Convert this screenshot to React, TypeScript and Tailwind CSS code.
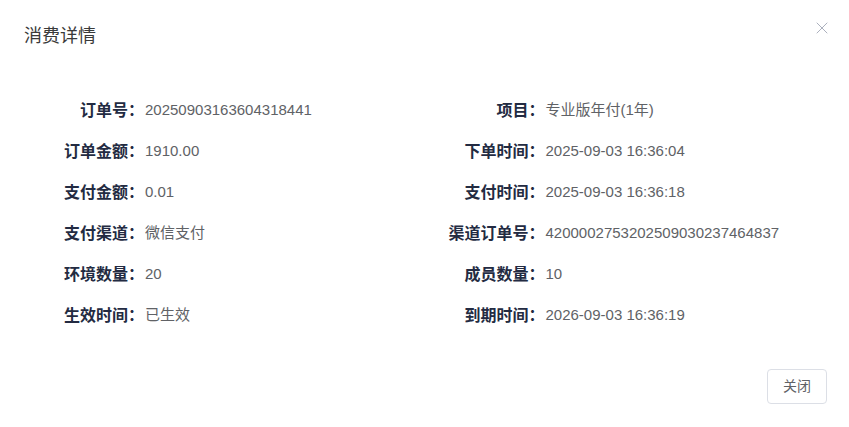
import React from 'react';
import { X } from 'lucide-react';

interface Field {
  label: string;
  value: string;
}

// left / right pairs, row by row
const rows: [Field, Field][] = [
  [
    { label: '订单号', value: '20250903163604318441' },
    { label: '项目', value: '专业版年付(1年)' },
  ],
  [
    { label: '订单金额', value: '1910.00' },
    { label: '下单时间', value: '2025-09-03 16:36:04' },
  ],
  [
    { label: '支付金额', value: '0.01' },
    { label: '支付时间', value: '2025-09-03 16:36:18' },
  ],
  [
    { label: '支付渠道', value: '微信支付' },
    { label: '渠道订单号', value: '4200002753202509030237464837' },
  ],
  [
    { label: '环境数量', value: '20' },
    { label: '成员数量', value: '10' },
  ],
  [
    { label: '生效时间', value: '已生效' },
    { label: '到期时间', value: '2026-09-03 16:36:19' },
  ],
];

const font = { fontFamily: '"Liberation Sans", "Noto Sans CJK SC", sans-serif' };

const Item: React.FC<Field> = ({ label, value }) => (
  <div className="flex h-[41px] items-center">
    <span className="w-[120px] shrink-0 text-right text-[16px] font-bold text-[#232b42]">
      {label}：
    </span>
    <span className="pl-px text-[15px] text-[#606266]">{value}</span>
  </div>
);

const App: React.FC = () => {
  return (
    <div className="h-[427px] w-[849px] bg-white" style={font}>
      <div className="flex justify-between pl-6 pr-[17px] pt-5">
        <h2 className="text-[18px] leading-8 font-normal text-[#3a3a3a]">消费详情</h2>
        <button className="flex h-4 w-5 items-center justify-center text-[#9aa0b0]">
          <X size={20} strokeWidth={1} />
        </button>
      </div>

      <div className="mt-[38px] grid grid-cols-2 px-6">
        {rows.map(([left, right], i) => (
          <React.Fragment key={i}>
            <Item {...left} />
            <Item {...right} />
          </React.Fragment>
        ))}
      </div>

      <div className="flex justify-end pr-[22px] pt-[33px]">
        <button className="h-[35px] w-[60px] rounded border border-[#dcdfe6] text-[14px] text-[#606266]">
          关闭
        </button>
      </div>
    </div>
  );
};

export default App;
